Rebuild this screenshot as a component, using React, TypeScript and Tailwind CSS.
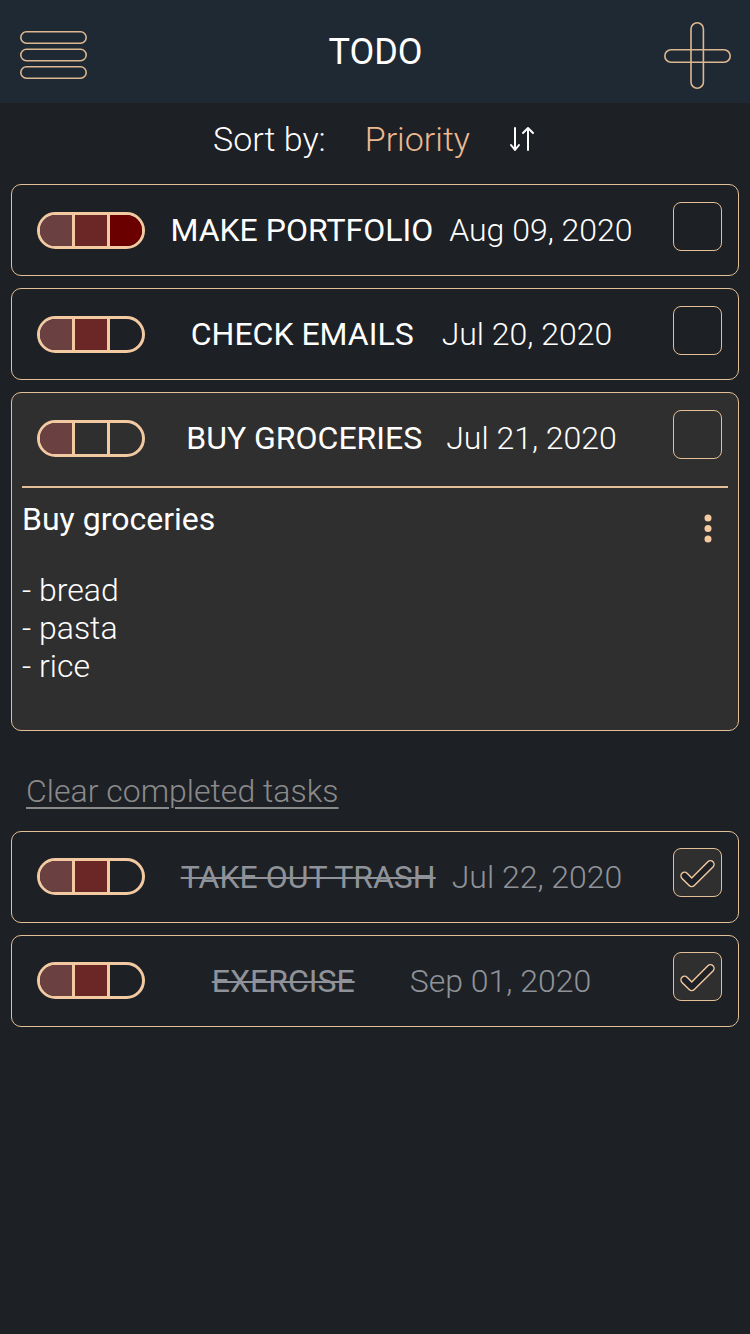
import React from "react";

type Task = {
  title: string;
  date: string;
  level: number;
  done: boolean;
  gap: string;
  open?: boolean;
};

const tasks: Task[] = [
  { title: "MAKE PORTFOLIO", date: "Aug 09, 2020", level: 3, done: false, gap: "gap-[16px]" },
  { title: "CHECK EMAILS", date: "Jul 20, 2020", level: 2, done: false, gap: "gap-[28px]" },
  { title: "BUY GROCERIES", date: "Jul 21, 2020", level: 1, done: false, gap: "gap-[24px]", open: true },
];

const completed: Task[] = [
  { title: "TAKE OUT TRASH", date: "Jul 22, 2020", level: 2, done: true, gap: "gap-[16px]" },
  { title: "EXERCISE", date: "Sep 01, 2020", level: 2, done: true, gap: "gap-[55px]" },
];

const segColors = ["bg-[#6b4040]", "bg-[#6b2626]", "bg-[#6b0000]"];

function PriorityPill({ level }: { level: number }) {
  return (
    <div className="flex h-[37px] w-[108px] shrink-0 overflow-hidden rounded-full border-[3px] border-[#f2c9a0]">
      {[0, 1, 2].map((i) => (
        <div
          key={i}
          className={
            "flex-1 " +
            (i > 0 ? "border-l-[3px] border-[#f2c9a0] " : "") +
            (i < level ? segColors[i] : "bg-transparent")
          }
        />
      ))}
    </div>
  );
}

function Checkbox({ checked }: { checked: boolean }) {
  return (
    <div
      className={
        "mb-[8px] flex h-[49px] w-[49px] shrink-0 items-center justify-center rounded-[8px] border-[1.5px] border-[#e3bf98] " +
        (checked ? "bg-[#2f2f2f]" : "")
      }
    >
      {checked && (
        <svg width="49" height="49" viewBox="0 0 49 49">
          <path
            d="M11 28 L18.5 35.5 L38 16"
            fill="none"
            stroke="#f2c9a0"
            strokeWidth="9"
            strokeLinecap="round"
            strokeLinejoin="round"
          />
          <path
            d="M11 28 L18.5 35.5 L38 16"
            fill="none"
            stroke="#1d2025"
            strokeWidth="6"
            strokeLinecap="round"
            strokeLinejoin="round"
          />
        </svg>
      )}
    </div>
  );
}

function TaskRow({ task }: { task: Task }) {
  return (
    <div className="flex h-[90px] items-center pl-[24.5px] pr-[16.5px]">
      <PriorityPill level={task.level} />
      <div className={"flex flex-1 items-center justify-center pr-[14px] text-[32px] leading-none " + task.gap}>
        <span
          className={
            task.done
              ? "text-[#8f9399] line-through decoration-[#8f9399] decoration-[2px]"
              : "text-white"
          }
        >
          {task.title}
        </span>
        <span className={task.done ? "text-[#8f9399] font-light" : "text-white font-light"}>{task.date}</span>
      </div>
      <Checkbox checked={task.done} />
    </div>
  );
}

function TaskCard({ task }: { task: Task }) {
  if (task.open) {
    return (
      <div className="rounded-[10px] border-[1.5px] border-[#e3bf98] bg-[#2f2f2f]">
        <TaskRow task={task} />
        <div className="mx-[10px] mt-[3px] h-[1.5px] bg-[#e3bf98]" />
        <div className="px-[10px] pb-[45px] pt-[12px]">
          <div className="flex items-start justify-between">
            <span className="text-[32px] leading-[38px] text-white">Buy groceries</span>
            <svg width="8" height="30" viewBox="0 0 8 30" className="mr-[16px] mt-[14px]">
              <circle cx="4" cy="4" r="3.5" fill="#f5c9a0" />
              <circle cx="4" cy="14.5" r="3.5" fill="#f5c9a0" />
              <circle cx="4" cy="25" r="3.5" fill="#f5c9a0" />
            </svg>
          </div>
          <div className="mt-[27px] text-[32px] font-light leading-[38px] text-white">
            <div>- bread</div>
            <div>- pasta</div>
            <div>- rice</div>
          </div>
        </div>
      </div>
    );
  }
  return (
    <div className="rounded-[10px] border-[1.5px] border-[#e3bf98] bg-[#1d2025]">
      <TaskRow task={task} />
    </div>
  );
}

export default function App() {
  return (
    <div className="min-h-[1334px] w-full bg-[#1d2025] font-[Roboto,'Noto_Sans',sans-serif]">
      <header className="flex h-[103px] items-center justify-between bg-[#1f2934] pl-[20px] pr-[19px]">
        <svg width="67" height="48" viewBox="0 0 67 48" className="mt-[6px]">
          <rect x="0.8" y="0.8" width="65.4" height="11.4" rx="5.7" fill="none" stroke="#dcb790" strokeWidth="1.6" />
          <rect x="0.8" y="18.3" width="65.4" height="11.4" rx="5.7" fill="none" stroke="#dcb790" strokeWidth="1.6" />
          <rect x="0.8" y="35.8" width="65.4" height="11.4" rx="5.7" fill="none" stroke="#dcb790" strokeWidth="1.6" />
        </svg>
        <h1 className="text-[36px] font-normal leading-none text-white">TODO</h1>
        <svg width="67" height="67" viewBox="0 0 67 67" className="mt-[8px]">
          <rect x="27" y="0.8" width="12.4" height="65.4" rx="6.2" fill="none" stroke="#dcb790" strokeWidth="1.6" />
          <rect x="0.8" y="27.8" width="65.4" height="12.4" rx="6.2" fill="none" stroke="#dcb790" strokeWidth="1.6" />
        </svg>
      </header>

      <div className="flex h-[71px] items-center justify-center gap-[39px] text-[34px] leading-none">
        <span className="text-white font-light">Sort by:</span>
        <span className="text-[#ecb990] font-light">Priority</span>
        <svg width="28" height="28" viewBox="0 0 28 28">
          <path d="M6 3 V25 M2 20 L6 25 L10 20" fill="none" stroke="#ffffff" strokeWidth="2" strokeLinecap="round" strokeLinejoin="round" />
          <path d="M19 25 V3 M14 8 L19 3 L24 8" fill="none" stroke="#ffffff" strokeWidth="2" strokeLinecap="round" strokeLinejoin="round" />
        </svg>
      </div>

      <div className="mt-[10px] flex flex-col gap-[12px] px-[11px]">
        {tasks.map((t) => (
          <TaskCard key={t.title} task={t} />
        ))}
      </div>

      <div className="px-[26px] pb-[22px] pt-[44px]">
        <button className="text-[32px] font-light leading-[32px] text-[#8a8a8a] underline decoration-[2px] underline-offset-[5px]">
          Clear completed tasks
        </button>
      </div>

      <div className="flex flex-col gap-[12px] px-[11px]">
        {completed.map((t) => (
          <TaskCard key={t.title} task={t} />
        ))}
      </div>
    </div>
  );
}
